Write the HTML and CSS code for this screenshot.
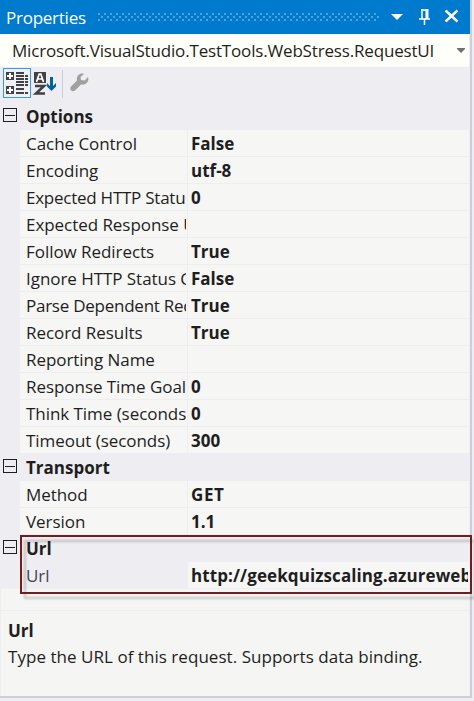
FILE: index.html
```html
<!DOCTYPE html>
<html lang="en">
<head>
<meta charset="utf-8">
<title>Properties</title>
<link rel="stylesheet" href="styles.css">
</head>
<body>
<main class="panel">
  <header class="titlebar">
    <span class="title">Properties</span>
    <span class="grip"></span>
    <svg class="window-icons" width="76" height="34" viewBox="0 0 76 34">
      <path d="M0 14h12l-6 6z" fill="#fff"/>
      <path d="M30 10h7M31 9v10M28 19h11M33.500 19v6" fill="none" stroke="#fff" stroke-width="1.500"/>
      <path d="M36 9v10" stroke="#fff" stroke-width="3"/>
      <path d="M54.500 10.500l12 11M66.500 10.500l-12 11" stroke="#fff" stroke-width="2.400"/>
    </svg>
  </header>
  <div class="selector"><span>Microsoft.VisualStudio.TestTools.WebStress.RequestUI</span>
    <svg width="8" height="6" viewBox="0 0 8 6"><path d="M0 0h8v1L4 5 0 1z" fill="#717171"/></svg>
  </div>
  <div class="toolbar">
    <svg width="100" height="35" viewBox="0 0 100 35">
      <rect x="3.500" y="2.500" width="27" height="29" fill="#f0f1f6" stroke="#3399ff"/>
      <path d="M6 6h8v8H6zM6 20h8v8H6z" fill="#424242"/>
      <path d="M10 7v6M7 10h6M10 21v6M7 24h6" stroke="#fff" stroke-width="2"/>
      <path d="M16 7h8M16 10h8M16 13h8M16 16h8M16 19h8M16 23h8M16 27h8M25 10h3M25 13h3M25 16h3M25 19h3M25 27h3" stroke="#424242" stroke-width="1.800"/>
      <path d="M34 6h12v11H34z" fill="#424242"/>
      <path d="M36.500 16l2.700-8h1.600l2.700 8M37.500 13h5" fill="none" stroke="#fff" stroke-width="1.700"/>
      <path d="M35 20h9l-8 7.500h9" fill="none" stroke="#424242" stroke-width="2.600"/>
      <path d="M51.500 11v11" stroke="#00629b" stroke-width="3"/>
      <path d="M47 17v3.500l4.500 4.500 4.500-4.500V17l-4.500 4.500z" fill="#00629b"/>
      <path d="M62.500 4v28" stroke="#cccedb"/>
      <path d="M84 8c-3-1.500-8 1-7 6.500l-6 6c-2 3 1 6 4 4l6-6c5 1 8.500-3 7-7.500l-3.500 3.500-3.500-.5-.5-3z" fill="#a0a0a0"/>
    </svg>
  </div>
  <section class="grid">
    <h2><i class="toggle"></i>Options</h2>
    <div class="row"><span>Cache Control</span><b>False</b></div>
    <div class="row"><span>Encoding</span><b>utf-8</b></div>
    <div class="row"><span class="tight">Expected HTTP Status Code</span><b>0</b></div>
    <div class="row"><span>Expected Response URL</span><b></b></div>
    <div class="row"><span>Follow Redirects</span><b>True</b></div>
    <div class="row"><span>Ignore HTTP Status Code</span><b>False</b></div>
    <div class="row"><span class="tight">Parse Dependent Requests</span><b>True</b></div>
    <div class="row"><span>Record Results</span><b>True</b></div>
    <div class="row"><span>Reporting Name</span><b></b></div>
    <div class="row"><span>Response Time Goal</span><b>0</b></div>
    <div class="row"><span>Think Time (seconds)</span><b>0</b></div>
    <div class="row"><span>Timeout (seconds)</span><b>300</b></div>
    <h2><i class="toggle"></i>Transport</h2>
    <div class="row"><span>Method</span><b class="wide">GET</b></div>
    <div class="row"><span>Version</span><b>1.1</b></div>
    <div class="url-group">
      <h2><i class="toggle"></i>Url</h2>
      <div class="row selected"><span>Url</span><b class="address">http://geekquizscaling.azurewebsites.net/</b></div>
      <div class="highlight"></div>
    </div>
  </section>
  <div class="spacer"></div>
  <footer class="description">
    <strong>Url</strong>
    <p>Type the URL of this request. Supports data binding.</p>
  </footer>
</main>
</body>
</html>
```
FILE: styles.css
```css
* { box-sizing: border-box; }
body {
  margin: 0;
  height: 701px;
  overflow: hidden;
  background: #eeeef2;
  color: #1e1e1e;
  font: 17px/27px "Open Sans", "Noto Sans", sans-serif;
}
.panel {
  width: 472px;
  height: 698px;
  border-right: 2px solid #cccedb;
  border-bottom: 2px solid #cccedb;
  display: flex;
  flex-direction: column;
}
.titlebar {
  height: 34px;
  flex: none;
  display: flex;
  background: #007acc;
  color: #fff;
  padding-left: 6px;
}
.title { width: 92px; line-height: 36px; letter-spacing: -0.25px; }
.grip {
  width: 281px;
  height: 8px;
  margin-top: 13px;
  background:
    linear-gradient(90deg, #4fa3dc 2px, transparent 2px) 0 0 / 6px 2px repeat-x,
    linear-gradient(90deg, #4fa3dc 2px, transparent 2px) 3px 3px / 6px 2px repeat-x,
    linear-gradient(90deg, #4fa3dc 2px, transparent 2px) 0 6px / 6px 2px repeat-x;
}
.window-icons { margin-left: 12px; }
.selector {
  height: 33px;
  flex: none;
  display: flex;
  justify-content: space-between;
  align-items: center;
  margin-right: 1px;
  padding: 0 8px 0 12px;
  background: #fffffa;
  border-bottom: 1px dotted #f8f8f8;
  letter-spacing: -0.17px;
  white-space: nowrap;
}
.selector svg { margin: 2px -4px 0 0; }
.toolbar { height: 36px; flex: none; }
.toolbar svg { display: block; margin-top: -1px; }
h2 {
  display: flex;
  align-items: center;
  height: 27px;
  margin: 0;
  padding-left: 3px;
  font-size: 17px;
  font-weight: 700;
}
.toggle {
  width: 14px;
  height: 14px;
  margin: -3px 9px 0 0;
  border: 1px solid #1e1e1e;
  background: linear-gradient(#1e1e1e, #1e1e1e) center / 10px 1px no-repeat;
}
.row {
  display: grid;
  grid-template-columns: 167px 281px;
  column-gap: 1px;
  height: 27px;
  padding-bottom: 1px;
  margin-left: 20px;
}
.row > * {
  overflow: hidden;
  white-space: nowrap;
  background: #f6f6f5;
  border-right: 1px solid #f6f6f5;
}
.row > span { padding-left: 6px; letter-spacing: -0.05px; }
.row > .tight { letter-spacing: -0.25px; }
.row > b { padding-left: 3px; }
.row > .wide { letter-spacing: 0.6px; }
.row .address { letter-spacing: 0.09px; }
.selected > span { background: none; border-color: transparent; color: #444450; }
.url-group { position: relative; }
.highlight {
  position: absolute;
  left: 20px;
  top: 0;
  width: 452px;
  height: 59px;
  border: 2px solid #711e20;
  filter: drop-shadow(4px 5px 1px rgb(0 0 0 / 20%));
}
.spacer { height: 21px; flex: none; margin: 0 1px; background: #f5f5f4; }
.description {
  flex: 1;
  margin: 1px 1px 0;
  padding: 6px 7px 0;
  background: #f5f5f4;
}
.description strong { display: block; height: 26px; }
.description p { margin: 0; letter-spacing: 0.04px; }
```
